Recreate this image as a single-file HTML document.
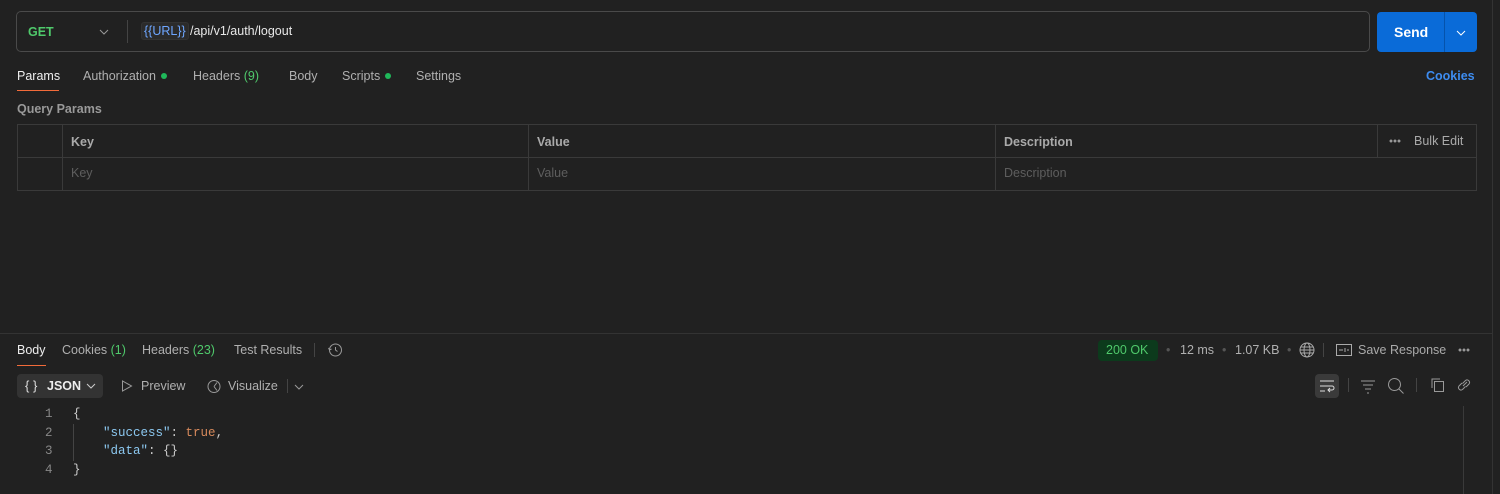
<!DOCTYPE html><html><head><style>
*{margin:0;padding:0;box-sizing:border-box}
body{width:1500px;height:494px;background:#212121;font-family:"Liberation Sans",sans-serif;font-size:12.5px;color:#b0b0b0;position:relative;overflow:hidden}
.a{position:absolute;white-space:nowrap}
.g{color:#4fc96b}
.dot{display:inline-block;width:6px;height:6px;border-radius:50%;background:#1fb85a;margin-left:5px;vertical-align:1px}
.mono{font-family:"Liberation Mono",monospace;font-size:12.5px}
.dd{position:absolute;width:12px;height:4px;background:radial-gradient(circle,#999 1.3px,transparent 1.6px) 0 0/4px 4px repeat-x}
</style></head><body>
<div class="a" style="left:1492px;top:0;width:1px;height:494px;background:#333"></div>
<div class="a" style="left:16px;top:11px;width:1354px;height:41px;border:1px solid #4a4a4a;border-radius:5px"></div>
<div class="a" style="left:28px;top:25px;color:#4fc96b;font-weight:bold;font-size:12.5px">GET</div>
<svg class="a" style="left:99px;top:29px" width="10" height="6"><path d="M1 1l4 4 4-4" stroke="#999" fill="none"/></svg>
<div class="a" style="left:127px;top:20px;width:1px;height:23px;background:#444"></div>
<div class="a" style="left:141px;top:22px;padding:1px 2px;background:#2b2b2b;border:1px solid #333;border-radius:3px;color:#6ea6ff">{{URL}}</div>
<div class="a" style="left:190px;top:24px;color:#e8e8e8">/api/v1/auth/logout</div>
<div class="a" style="left:1377px;top:12px;width:100px;height:40px;background:#0a6bd8;border-radius:4px"></div>
<div class="a" style="left:1444px;top:12px;width:1px;height:40px;background:#0553ac"></div>
<div class="a" style="left:1394px;top:24px;color:#fff;font-weight:bold;font-size:14px">Send</div>
<svg class="a" style="left:1456px;top:30px" width="10" height="6"><path d="M1 1l4 4 4-4" stroke="#fff" fill="none"/></svg>
<div class="a" style="left:17px;top:69px;color:#eee">Params</div>
<div class="a" style="left:17px;top:90px;width:42px;height:1px;background:#f26b3a"></div>
<div class="a" style="left:83px;top:69px">Authorization<span class="dot"></span></div>
<div class="a" style="left:193px;top:69px">Headers <span class="g">(9)</span></div>
<div class="a" style="left:289px;top:69px">Body</div>
<div class="a" style="left:342px;top:69px">Scripts<span class="dot"></span></div>
<div class="a" style="left:416px;top:69px">Settings</div>
<div class="a" style="left:1426px;top:69px;color:#3d8cf0;font-weight:bold">Cookies</div>
<div class="a" style="left:17px;top:102px;font-weight:bold;color:#999">Query Params</div>
<div class="a" style="left:17px;top:124px;width:1460px;height:67px;border:1px solid #3a3a3a"></div>
<div class="a" style="left:17px;top:157px;width:1460px;height:1px;background:#3a3a3a"></div>
<div class="a" style="left:62px;top:124px;width:1px;height:67px;background:#3a3a3a"></div>
<div class="a" style="left:528px;top:124px;width:1px;height:67px;background:#3a3a3a"></div>
<div class="a" style="left:995px;top:124px;width:1px;height:67px;background:#3a3a3a"></div>
<div class="a" style="left:1377px;top:124px;width:1px;height:34px;background:#3a3a3a"></div>
<div class="a" style="left:71px;top:135px;font-weight:bold;color:#aaa">Key</div>
<div class="a" style="left:537px;top:135px;font-weight:bold;color:#aaa">Value</div>
<div class="a" style="left:1004px;top:135px;font-weight:bold;color:#aaa">Description</div>
<div class="dd" style="left:1389px;top:139px"></div>
<div class="a" style="left:1414px;top:134px;color:#aaa">Bulk Edit</div>
<div class="a" style="left:71px;top:166px;color:#5e5e5e">Key</div>
<div class="a" style="left:537px;top:166px;color:#5e5e5e">Value</div>
<div class="a" style="left:1004px;top:166px;color:#5e5e5e">Description</div>
<div class="a" style="left:0;top:333px;width:1492px;height:1px;background:#333"></div>
<div class="a" style="left:17px;top:343px;color:#eee">Body</div>
<div class="a" style="left:17px;top:365px;width:29px;height:1px;background:#f26b3a"></div>
<div class="a" style="left:62px;top:343px">Cookies <span class="g">(1)</span></div>
<div class="a" style="left:142px;top:343px">Headers <span class="g">(23)</span></div>
<div class="a" style="left:234px;top:343px">Test Results</div>
<div class="a" style="left:314px;top:343px;width:1px;height:14px;background:#444"></div>
<svg class="a" style="left:327px;top:342px" width="16" height="16"><circle cx="8.5" cy="8" r="6" stroke="#999" fill="none"/><path d="M8.5 5v3l2 1.5M1.5 6l1 2 2-1" stroke="#999" fill="none"/></svg>
<div class="a" style="left:1098px;top:340px;width:60px;height:21px;background:#0c3a1c;border-radius:4px"></div>
<div class="a" style="left:1106px;top:343px;color:#4fc96b">200 OK</div>
<div class="a" style="left:1166px;top:343px;color:#555">•</div>
<div class="a" style="left:1180px;top:343px">12 ms</div>
<div class="a" style="left:1222px;top:343px;color:#555">•</div>
<div class="a" style="left:1235px;top:343px">1.07 KB</div>
<div class="a" style="left:1287px;top:343px;color:#555">•</div>
<svg class="a" style="left:1298px;top:341px" width="18" height="18"><circle cx="9" cy="9" r="7" stroke="#aaa" fill="none"/><ellipse cx="9" cy="9" rx="3" ry="7" stroke="#aaa" fill="none"/><path d="M2 9h14M3 6h12M3 12h12" stroke="#aaa"/></svg>
<div class="a" style="left:1323px;top:343px;width:1px;height:14px;background:#444"></div>
<svg class="a" style="left:1336px;top:343px" width="17" height="14"><rect x="0.5" y="1.5" width="15" height="11" stroke="#aaa" fill="none"/><path d="M3 7h4M9 5v4M11 7h2" stroke="#aaa"/></svg>
<div class="a" style="left:1358px;top:343px;color:#aaa">Save Response</div>
<div class="dd" style="left:1458px;top:348px"></div>
<div class="a" style="left:17px;top:374px;width:86px;height:24px;background:#333;border-radius:4px"></div>
<div class="a" style="left:25px;top:378px;color:#ddd;font-size:13px">{ }</div>
<div class="a" style="left:47px;top:379px;color:#eee;font-weight:bold">JSON</div>
<svg class="a" style="left:86px;top:383px" width="10" height="6"><path d="M1 1l4 4 4-4" stroke="#ccc" fill="none"/></svg>
<svg class="a" style="left:121px;top:380px" width="12" height="12"><path d="M1.5 1v10l9-5z" stroke="#999" fill="none"/></svg>
<div class="a" style="left:141px;top:379px">Preview</div>
<svg class="a" style="left:206px;top:378px" width="16" height="16"><circle cx="8" cy="8.5" r="6" stroke="#999" fill="none"/><path d="M8 8.5l3-4M8 8.5l3 4" stroke="#999"/></svg>
<div class="a" style="left:228px;top:379px">Visualize</div>
<div class="a" style="left:287px;top:379px;width:1px;height:14px;background:#444"></div>
<svg class="a" style="left:294px;top:384px" width="10" height="6"><path d="M1 1l4 4 4-4" stroke="#999" fill="none"/></svg>
<div class="a" style="left:1315px;top:374px;width:24px;height:24px;background:#3a3a3a;border-radius:4px"></div>
<svg class="a" style="left:1319px;top:378px" width="16" height="16"><path d="M1 3h14M1 8h12a2 2 0 010 4H9M11 10l-2 2 2 2M1 13h5" stroke="#ddd" fill="none"/></svg>
<div class="a" style="left:1348px;top:378px;width:1px;height:14px;background:#444"></div>
<svg class="a" style="left:1360px;top:378px" width="16" height="16"><path d="M1 3h14M3 7h10M5 11h6M7 15h2" stroke="#999"/></svg>
<svg class="a" style="left:1387px;top:377px" width="18" height="18"><circle cx="7.5" cy="7.5" r="6" stroke="#999" fill="none"/><path d="M12 12l4.5 4.5" stroke="#999"/></svg>
<div class="a" style="left:1416px;top:378px;width:1px;height:14px;background:#444"></div>
<svg class="a" style="left:1429px;top:377px" width="16" height="16"><path d="M3 11V2h8" stroke="#999" fill="none"/><rect x="5.5" y="4.5" width="9" height="10" stroke="#999" fill="none"/></svg>
<svg class="a" style="left:1456px;top:377px" width="16" height="16"><path d="M7 9l4-4M6 6l-3 3a2.5 2.5 0 003.5 3.5l3-3M10 10l3-3a2.5 2.5 0 00-3.5-3.5l-3 3" stroke="#999" fill="none"/></svg>
<div class="a" style="left:1463px;top:406px;width:1px;height:88px;background:#3a3a3a"></div>
<div class="a mono" style="left:45px;top:405px;color:#888;line-height:18.5px">1<br>2<br>3<br>4</div>
<div class="a" style="left:73px;top:424px;width:1px;height:37px;background:#444"></div>
<div class="a mono" style="left:73px;top:405px;line-height:18.5px;color:#ccc;white-space:pre">{
    <span style="color:#8cc8f0">"success"</span>: <span style="color:#d88a5c">true</span>,
    <span style="color:#8cc8f0">"data"</span>: {}
}</div>
</body></html>
